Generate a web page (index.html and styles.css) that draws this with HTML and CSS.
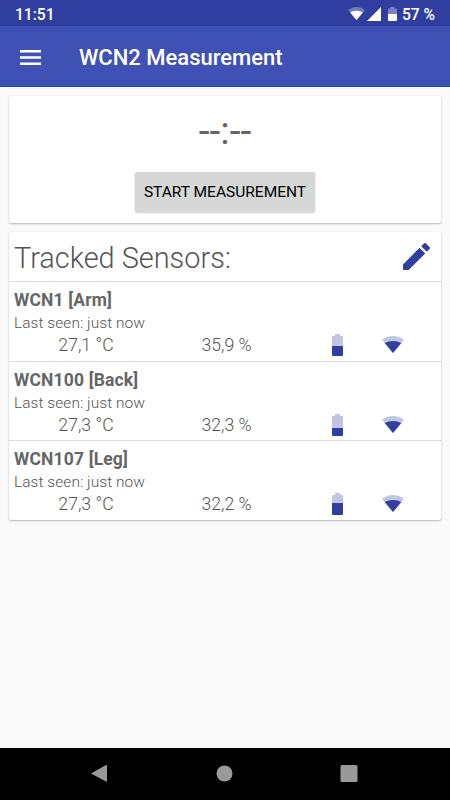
FILE: index.html
```html
<!DOCTYPE html>
<html lang="en">
<head>
<meta charset="utf-8">
<title>WCN2 Measurement</title>
<link rel="stylesheet" href="styles.css">
</head>
<body>
<svg width="0" height="0" class="defs">
  <symbol id="wifi" viewBox="0 0 22 17">
    <path opacity=".3" d="M11 0C6.800 0 3 1.400 0 3.800L11 17 22 3.800C19 1.400 15.200 0 11 0z"/>
    <path d="M11 5C8 5 5.200 5.700 2.700 7.100L11 17 19.300 7.100C16.800 5.700 14 5 11 5z"/>
  </symbol>
</svg>
<header class="status">
  <span class="clock">11:51</span>
  <svg class="s-wifi"><use href="#wifi"/></svg>
  <svg class="s-signal" viewBox="0 0 14 14"><path d="M0 14H14V0z"/></svg>
  <svg class="s-battery" viewBox="0 0 9 14"><path opacity=".35" d="M2.500 0h4v1.500H8.200q.8 0 .8.800V7H0V2.300q0-.8.800-.8H2.500z"/><path d="M0 7h9v6.200q0 .8-.8.8H.8q-.8 0-.8-.8z"/></svg>
  <span class="percent">57 %</span>
</header>
<nav class="toolbar">
  <svg class="menu" viewBox="0 0 21 15"><path d="M0 0h21v2.500H0zM0 6.200h21v2.500H0zM0 12.400h21v2.500H0z"/></svg>
  <h1>WCN2 Measurement</h1>
</nav>
<main>
  <section class="card timer">
    <div class="time">--:--</div>
    <button>START MEASUREMENT</button>
  </section>
  <section class="card sensors">
    <div class="head">
      <h2>Tracked Sensors:</h2>
      <svg class="edit" viewBox="3 3 18 18"><path d="M3 17.250V21h3.750L17.810 9.940l-3.750-3.750L3 17.250zM20.710 7.040c.39-.39.39-1.020 0-1.410l-2.340-2.340c-.39-.39-1.020-.39-1.410 0l-1.830 1.830 3.750 3.750 1.830-1.830z"/></svg>
    </div>
    <article class="row">
      <h3>WCN1 [Arm]</h3>
      <p>Last seen: just now</p>
      <div class="values"><span>27,1 °C</span><span>35,9 %</span>
        <svg class="battery" viewBox="0 0 11 22"><path opacity=".3" d="M3 0h5v2h2q1 0 1 1v9H0V3q0-1 1-1h2z"/><path d="M0 12h11v9q0 1-1 1H1q-1 0-1-1z"/></svg>
        <svg class="wifi"><use href="#wifi"/></svg></div>
    </article>
    <article class="row">
      <h3>WCN100 [Back]</h3>
      <p>Last seen: just now</p>
      <div class="values"><span>27,3 °C</span><span>32,3 %</span>
        <svg class="battery" viewBox="0 0 11 22"><path opacity=".3" d="M3 0h5v2h2q1 0 1 1v11H0V3q0-1 1-1h2z"/><path d="M0 14h11v7q0 1-1 1H1q-1 0-1-1z"/></svg>
        <svg class="wifi"><use href="#wifi"/></svg></div>
    </article>
    <article class="row">
      <h3>WCN107 [Leg]</h3>
      <p>Last seen: just now</p>
      <div class="values"><span>27,3 °C</span><span>32,2 %</span>
        <svg class="battery" viewBox="0 0 11 22"><path opacity=".3" d="M3 0h5v2h2q1 0 1 1v7H0V3q0-1 1-1h2z"/><path d="M0 10h11v11q0 1-1 1H1q-1 0-1-1z"/></svg>
        <svg class="wifi"><use href="#wifi"/></svg></div>
    </article>
  </section>
</main>
<footer class="navbar">
  <svg viewBox="0 0 18 18"><path d="M1 9.500 16 1.100q1-.5 1 .5V17q0 1-1 .6z"/></svg>
  <svg viewBox="0 0 18 18"><circle cx="9.500" cy="9.500" r="8"/></svg>
  <svg viewBox="0 0 18 18"><rect x=".5" y="1" width="17" height="17" rx="1.500"/></svg>
</footer>
</body>
</html>
```

FILE: styles.css
```css
* { box-sizing: border-box; margin: 0; padding: 0; }
body {
  width: 450px; height: 800px; overflow: hidden;
  display: flex; flex-direction: column;
  font-family: Roboto, sans-serif; background: #fafafa; color: #666;
}
svg { display: block; flex: none; }
.defs { display: none; }
.status {
  flex: none; height: 26px; background: #303f9f; color: #fff; fill: #fff;
  display: flex; align-items: center; padding: 2px 15px 0;
}
.clock, .percent { font-size: 15.600px; font-weight: 500; line-height: 24px; }
.clock { margin-right: auto; position: relative; top: 1px; }
.percent { width: 33px; white-space: nowrap; position: relative; top: 1px; }
.s-wifi { width: 17px; height: 13px; margin: -1px 2px 0 0; }
.s-signal { width: 14px; height: 14px; margin: -1px 7px 0 0; }
.s-battery { width: 9px; height: 14px; margin: -1px 5px 0 0; }
.toolbar {
  flex: none; height: 61px; background: #3f51b5; border-bottom: 1px solid #2345b0;
  display: flex; align-items: center; padding: 3px 20px 0; color: #fff; fill: #fff;
}
.menu { width: 21px; height: 15px; margin: -1px 38px 0 0; }
h1 { font-size: 22px; font-weight: 500; line-height: 30px; margin-top: 1px; white-space: nowrap; }
main { flex: 1; padding: 9px; }
.card { background: #fff; border-radius: 2px; box-shadow: 0 1px 2px rgba(0,0,0,.26), 0 0 1px rgba(0,0,0,.15); }
.timer { height: 127px; margin-bottom: 9px; display: flex; flex-direction: column; align-items: center; }
.time { font-size: 39px; line-height: 46px; margin-top: 12px; }
button {
  width: 180px; height: 40px; margin-top: 18px; border: 0; border-radius: 2px;
  background: #d6d7d7; color: #000; font: 400 15.500px/41px Roboto, sans-serif;
  box-shadow: 0 1px 2px rgba(0,0,0,.2); white-space: nowrap;
}
.head {
  height: 50px; border-bottom: 1px solid #ddd; padding: 2px 11px 0 5px;
  display: flex; justify-content: space-between; align-items: center;
}
h2 { font-size: 28.900px; font-weight: 300; line-height: 36px; white-space: nowrap; color: #555; }
.edit { width: 27px; height: 27px; margin-top: -2px; fill: #303f9f; }
.row { height: 79px; padding: 7px 0 0 5px; border-bottom: 1px solid #ddd; }
.row:first-of-type { height: 80px; padding-top: 7px; }
.row:last-child { border-bottom: 0; }
h3 { font-size: 17.500px; font-weight: 700; line-height: 23px; letter-spacing: .15px; }
p { font-size: 15.500px; font-weight: 300; line-height: 22px; letter-spacing: .05px; color: #555; }
.values {
  display: grid; grid-template-columns: 142px 139px 82px 30px; align-items: center;
  font-size: 17.700px; font-weight: 300; line-height: 23px; padding-left: 1px; color: #555;
}
.values span { text-align: center; }
.battery { width: 11px; height: 22px; margin-top: -1px; justify-self: center; fill: #303f9f; }
.wifi { width: 22px; height: 17px; margin-top: -2px; justify-self: center; fill: #303f9f; }
.navbar {
  flex: none; height: 52px; background: #000; fill: #999;
  display: flex; align-items: center; justify-content: space-between; padding: 0 92px 2px 90px;
}
.navbar svg { width: 18px; height: 18px; }
```
